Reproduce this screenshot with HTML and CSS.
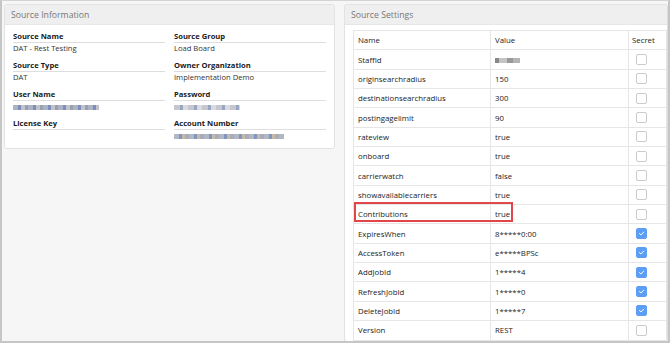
FILE: index.html
```html
<!DOCTYPE html>
<html>
<head>
<meta charset="utf-8">
<link rel="stylesheet" href="styles.css">
</head>
<body>
<div class="frame">
  <section class="panel info">
    <div class="panel-head">Source Information</div>
    <div class="fields">
      <div class="field"><div class="label">Source Name</div><div class="value">DAT - Rest Testing</div></div>
      <div class="field"><div class="label">Source Group</div><div class="value">Load Board</div></div>
      <div class="field"><div class="label">Source Type</div><div class="value">DAT</div></div>
      <div class="field"><div class="label">Owner Organization</div><div class="value">Implementation Demo</div></div>
      <div class="field"><div class="label">User Name</div><div class="value"><span class="redact r-user"></span></div></div>
      <div class="field"><div class="label">Password</div><div class="value"><span class="redact r-pass"></span></div></div>
      <div class="field"><div class="label">License Key</div><div class="value"></div></div>
      <div class="field"><div class="label">Account Number</div><div class="value"><span class="redact r-acct"></span></div></div>
    </div>
  </section>
  <section class="panel settings">
    <div class="panel-head">Source Settings</div>
    <div class="table-wrap">
      <table class="grid">
        <thead>
          <tr><th class="c-name">Name</th><th class="c-val">Value</th><th class="c-sec">Secret</th></tr>
        </thead>
        <tbody>
          <tr><td>StaffId</td><td><span class="redact r-staff"></span></td><td><span class="cb"></span></td></tr>
          <tr><td>originsearchradius</td><td>150</td><td><span class="cb"></span></td></tr>
          <tr><td>destinationsearchradius</td><td>300</td><td><span class="cb"></span></td></tr>
          <tr><td>postingagelimit</td><td>90</td><td><span class="cb"></span></td></tr>
          <tr><td>rateview</td><td>true</td><td><span class="cb"></span></td></tr>
          <tr><td>onboard</td><td>true</td><td><span class="cb"></span></td></tr>
          <tr><td>carrierwatch</td><td>false</td><td><span class="cb"></span></td></tr>
          <tr><td>showavailablecarriers</td><td>true</td><td><span class="cb"></span></td></tr>
          <tr><td>Contributions</td><td>true</td><td><span class="cb"></span></td></tr>
          <tr><td>ExpiresWhen</td><td>8*****0:00</td><td><span class="cb on"><svg viewBox="0 0 11 11"><path d="M3 5.6 L4.8 7.3 L8.2 3.8" /></svg></span></td></tr>
          <tr><td>AccessToken</td><td>e*****BPSc</td><td><span class="cb on"><svg viewBox="0 0 11 11"><path d="M3 5.6 L4.8 7.3 L8.2 3.8" /></svg></span></td></tr>
          <tr><td>AddJobId</td><td>1*****4</td><td><span class="cb on"><svg viewBox="0 0 11 11"><path d="M3 5.6 L4.8 7.3 L8.2 3.8" /></svg></span></td></tr>
          <tr><td>RefreshJobId</td><td>1*****0</td><td><span class="cb on"><svg viewBox="0 0 11 11"><path d="M3 5.6 L4.8 7.3 L8.2 3.8" /></svg></span></td></tr>
          <tr><td>DeleteJobId</td><td>1*****7</td><td><span class="cb on"><svg viewBox="0 0 11 11"><path d="M3 5.6 L4.8 7.3 L8.2 3.8" /></svg></span></td></tr>
          <tr><td>Version</td><td>REST</td><td><span class="cb"></span></td></tr>
        </tbody>
      </table>
      <div class="highlight"></div>
    </div>
  </section>
</div>
</body>
</html>
```

FILE: styles.css
```css
* { box-sizing: border-box; }
html, body { margin: 0; padding: 0; }
body {
  width: 670px;
  height: 343px;
  overflow: hidden;
  font-family: "Open Sans", "Noto Sans", sans-serif;
  color: #222;
}
.frame {
  width: 670px;
  height: 343px;
  background: #f6f6f6;
  border: 2px solid #c6c6c6;
  border-top: 1px solid #d4d4d4;
  display: flex;
  align-items: flex-start;
  gap: 9px;
  padding: 3px 0 0 2px;
  overflow: hidden;
}
.panel {
  background: #fff;
  border: 1px solid #e2e2e2;
  border-radius: 3px;
  overflow: hidden;
}
.panel-head {
  height: 20px;
  line-height: 21px;
  background: #efefef;
  border-bottom: 1px solid #e6e6e6;
  color: #777;
  font-size: 8.7px;
  padding-left: 6px;
}
.info { width: 331px; }
.settings { width: 324px; flex: none; border-right: 1px solid #dcdcdc; }
.fields {
  display: grid;
  grid-template-columns: 1fr 1fr;
  column-gap: 9px;
  row-gap: 7.3px;
  padding: 5.5px 8px 8px 8px;
}
.label {
  font-weight: 700;
  font-size: 7.6px;
  line-height: 11px;
  color: #1a1a1a;
  border-bottom: 1px solid #dedede;
}
.value {
  font-size: 7.6px;
  line-height: 10px;
  height: 10px;
  color: #333;
  white-space: nowrap;
}
.redact {
  display: inline-block;
  height: 5px;
  vertical-align: middle;
  filter: blur(0.7px);
  background: repeating-linear-gradient(90deg, #aab4c6 0 5px, #7b8fb8 5px 8px, #c3c3cc 8px 12px, #9aa0ae 12px 15px);
}
.r-user { width: 86px; }
.r-pass { width: 66px; background: repeating-linear-gradient(90deg, #c6c6d0 0 6px, #99a6c0 6px 9px, #dadae0 9px 14px); }
.r-acct { width: 110px; background: repeating-linear-gradient(90deg, #b0b8c8 0 5px, #8096c0 5px 8px, #c9b8a8 8px 11px, #a8adb8 11px 15px); }
.r-staff { width: 25px; background: linear-gradient(90deg, #888 0 4px, #c4c4c4 4px 12px, #999 12px 18px, #b4b4b4 18px); }
.table-wrap {
  position: relative;
  margin: 5px 0 0 8px;
}
.grid {
  border-collapse: collapse;
  width: 313px;
  font-size: 7.8px;
  color: #222;
  table-layout: fixed;
}
.grid th, .grid td {
  border: 1px solid #e6e6e6;
  height: 19.35px;
  padding: 0 0 0 4px;
  text-align: left;
  font-weight: 400;
  white-space: nowrap;
  vertical-align: middle;
}
.grid th { color: #1a1a1a; }
.c-name { width: 137px; }
.c-val { width: 138px; }
.c-sec { width: 38px; padding-left: 3px !important; }
.grid td:last-child { padding-left: 7px; }
.cb {
  display: block;
  width: 11px;
  height: 11px;
  border: 1px solid #cbcbcb;
  border-radius: 2px;
  background: #fff;
}
.cb.on {
  background: #5c9ef3;
  border-color: #5c9ef3;
}
.cb svg {
  display: block;
  width: 9px;
  height: 9px;
}
.cb path {
  fill: none;
  stroke: #fff;
  stroke-width: 1.2;
  stroke-linecap: round;
  stroke-linejoin: round;
}
.highlight {
  position: absolute;
  left: 1px;
  top: 172px;
  width: 159px;
  height: 20px;
  border: 2px solid #e0464a;
}
```
